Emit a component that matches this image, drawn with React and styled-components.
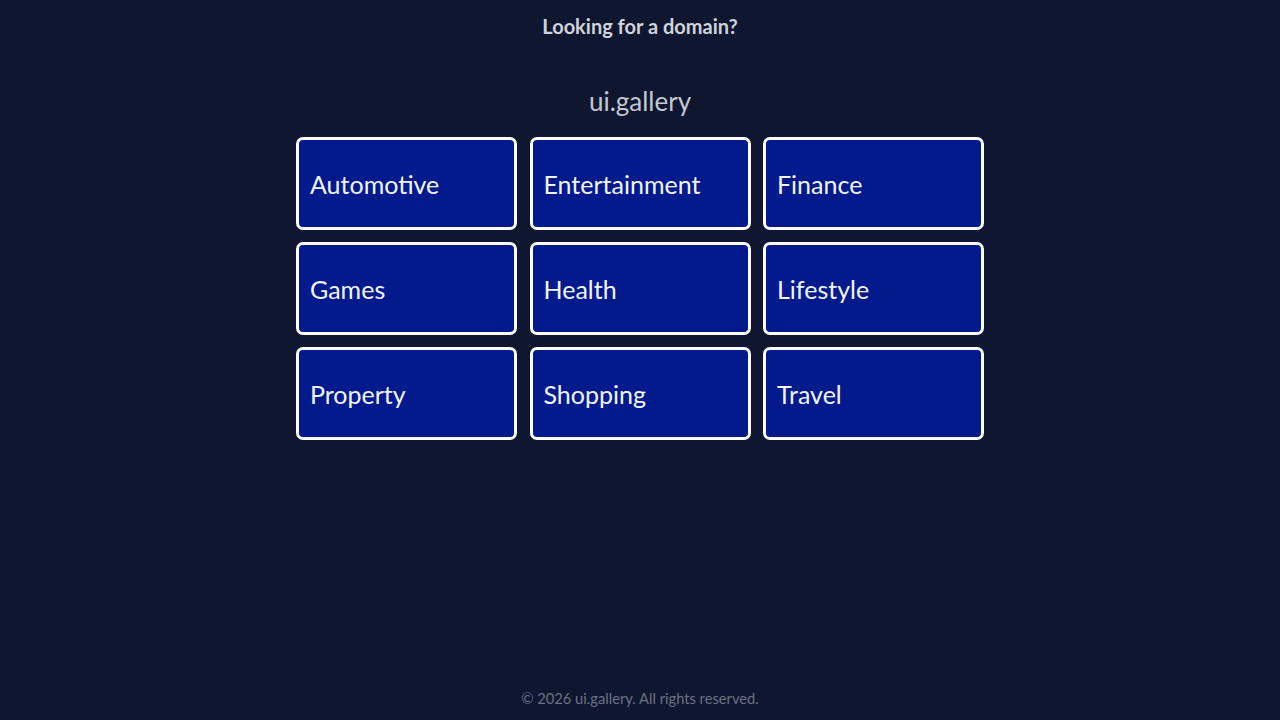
import React from "react";
import styled, { createGlobalStyle } from "styled-components";

const Global = createGlobalStyle`
  html, body { margin: 0; padding: 0; background: #0f1630; }
  body { font-family: "Source Sans Pro", Lato, "Noto Sans", sans-serif; }
`;

const Page = styled.div`
  min-height: 720px;
  display: flex;
  flex-direction: column;
  align-items: center;
  background: #0f1630;
`;

const Top = styled.div`
  font-size: 20px;
  font-weight: 700;
  color: #cfd3dc;
  margin-top: 13px;
  line-height: 26px;
`;

const Brand = styled.h1`
  margin: 46px 0 0;
  font-size: 26px;
  font-weight: 400;
  color: #c3c7d0;
  line-height: 32px;
`;

const Grid = styled.div`
  margin-top: 20px;
  display: grid;
  grid-template-columns: repeat(3, 221px);
  grid-auto-rows: 93px;
  column-gap: 12.5px;
  row-gap: 12px;
`;

const Card = styled.a`
  box-sizing: border-box;
  display: flex;
  align-items: center;
  padding: 1px 11px 0;
  background: #031a8c;
  border: 3px solid #ffffff;
  border-radius: 7px;
  color: #f2f4ff;
  font-size: 25px;
  text-decoration: none;
`;

const Footer = styled.footer`
  margin-top: auto;
  margin-bottom: 13px;
  font-size: 14.7px;
  color: #6b7282;
`;

const items = [
  "Automotive", "Entertainment", "Finance",
  "Games", "Health", "Lifestyle",
  "Property", "Shopping", "Travel",
];

export default function App() {
  return (
    <Page>
      <Global />
      <Top>Looking for a domain?</Top>
      <Brand>ui.gallery</Brand>
      <Grid>
        {items.map((i) => (
          <Card key={i} href="#">{i}</Card>
        ))}
      </Grid>
      <Footer>© 2026 ui.gallery. All rights reserved.</Footer>
    </Page>
  );
}
